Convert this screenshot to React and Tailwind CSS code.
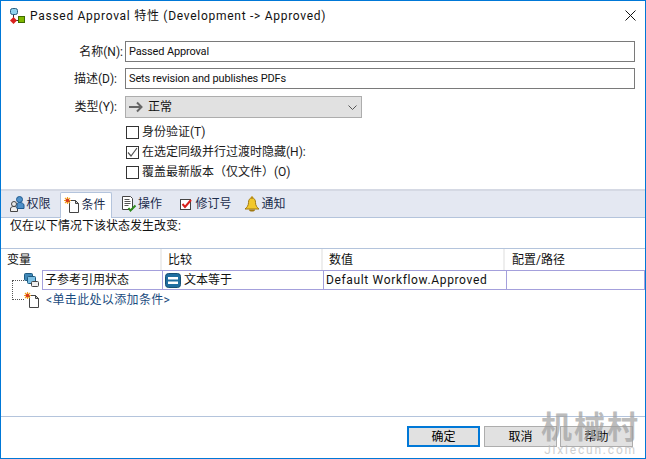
const FONT = "font-['Roboto','Noto_Sans_CJK_SC',sans-serif]";

const TitleIcon = () => (
  <svg width="16" height="16" viewBox="0 0 16 16">
    <path d="M4.500 7v3M4.500 12.500h5" stroke="#333" fill="none" />
    <rect x="1.500" y="0.500" width="7" height="6" rx="2" fill="#8fd3ee" stroke="#2a5f80" />
    <path d="M4.500 9l3.500 3.500L4.500 16 1 12.500z" fill="#d8201c" />
    <rect x="9.500" y="8.500" width="6" height="6" fill="#7fb800" stroke="#3f6a00" />
  </svg>
);

const UsersIcon = () => (
  <svg width="16" height="16" viewBox="0 0 16 16">
    <circle cx="5" cy="8" r="2.500" fill="#e8e8e8" stroke="#444" />
    <path d="M1.500 15.500v-2.500c0-1.500 1-2.500 3.500-2.500s3.500 1 3.500 2.500v2.500z" fill="#eee" stroke="#444" />
    <circle cx="10.500" cy="3.500" r="3" fill="#4f90c8" stroke="#1f5a90" />
    <path d="M8 12.500V9c0-1.600 1-2.600 2.500-2.600S15 7.400 15 9v3.500z" fill="#4f90c8" stroke="#1f5a90" />
  </svg>
);

const NewDocIcon = () => (
  <svg width="16" height="16" viewBox="0 0 16 16">
    <path d="M5.500 3.500h6l3 3v9h-9z" fill="#fff" stroke="#444" />
    <path d="M11.500 3.500v3h3z" fill="#ccc" stroke="#444" />
    <path d="M3.500 0v7M0 3.500h7M1 1l5 5M6 1L1 6" stroke="#f0a020" strokeWidth="1.200" />
    <circle cx="3.500" cy="3.500" r="1.800" fill="#d8381c" />
  </svg>
);

const DocCheckIcon = () => (
  <svg width="16" height="16" viewBox="0 0 16 16">
    <path d="M1.500 0.500h8l2 2v11h-10z" fill="#fff" stroke="#444" />
    <path d="M3.500 3.500h5M3.500 5.500h6M3.500 7.500h6M3.500 9.500h4" stroke="#555" />
    <path d="M7.500 12l2 2.500 5-5" stroke="#2f8a1c" strokeWidth="2" fill="none" />
  </svg>
);

const CheckBoxIcon = () => (
  <svg width="16" height="16" viewBox="0 0 16 16">
    <rect x="2.500" y="3.500" width="10" height="10" fill="#fff" stroke="#444" />
    <path d="M4.500 8l2.500 3 6-7" stroke="#d8201c" strokeWidth="2" fill="none" />
  </svg>
);

const BellIcon = () => (
  <svg width="16" height="16" viewBox="0 0 16 16">
    <circle cx="8" cy="1.500" r="1.200" fill="#c89a1c" />
    <path d="M8 2C5.500 2 4.500 4 4.500 6.500c0 3-1.500 5-3.500 6.500h14c-2-1.500-3.500-3.500-3.500-6.500C11.500 4 10.500 2 8 2z" fill="#f2c82c" stroke="#a07810" />
    <path d="M5 13.500a3 2 0 0 0 6 0z" fill="#a07810" />
  </svg>
);

const RefIcon = () => (
  <svg width="16" height="15" viewBox="0 0 16 15">
    <rect x="0.500" y="0.500" width="8" height="7" rx="1" fill="#3f88b8" stroke="#1f5a80" />
    <rect x="3.500" y="3.500" width="8" height="7" rx="1" fill="#7cc0e4" stroke="#1f5a80" />
    <rect x="7.500" y="8.500" width="7" height="5" rx="1" fill="#eee" stroke="#444" />
  </svg>
);

const EqualsIcon = () => (
  <svg width="16" height="15" viewBox="0 0 16 15">
    <rect x="0.500" y="0.500" width="15" height="14" rx="3" fill="#1f6ea0" stroke="#174f74" />
    <rect x="3" y="4" width="10" height="2.500" fill="#fff" />
    <rect x="3" y="8.500" width="10" height="2.500" fill="#fff" />
  </svg>
);

const Arrow = () => (
  <svg width="15" height="12" viewBox="0 0 15 12">
    <path d="M0 6h13M8 1.500L12.500 6 8 10.500" stroke="#666" strokeWidth="2" fill="none" />
  </svg>
);

const Checkbox = ({ checked, label }) => (
  <div className="flex items-center gap-[3px] h-5">
    <span className="flex items-center justify-center w-[13px] h-[13px] border border-[#333] bg-white">
      {checked && (
        <svg width="11" height="11" viewBox="0 0 11 11">
          <path d="M1 5.500l3 3.500 6-8" stroke="#555" strokeWidth="1.200" fill="none" />
        </svg>
      )}
    </span>
    <span className="text-[12px] text-[#1a1a1a]">{label}</span>
  </div>
);

const Field = ({ label, pad, children }) => (
  <div className="flex items-center">
    <span className={`w-[124px] text-right text-[12px] text-[#1a1a1a] ${pad}`}>{label}</span>
    {children}
  </div>
);

const tabs = [
  { name: '权限', icon: <UsersIcon />, cls: 'w-[54px] pr-[6px]' },
  { name: '条件', icon: <NewDocIcon />, cls: 'w-[52px] pr-[2px]', active: true },
  { name: '操作', icon: <DocCheckIcon />, cls: 'w-[56px] pl-[3px]' },
  { name: '修订号', icon: <CheckBoxIcon />, cls: 'w-[68px] pl-[6px]' },
  { name: '通知', icon: <BellIcon />, cls: 'w-[56px] pl-[2px]' },
];

const Btn = ({ children, primary }) => (
  <button
    className={`w-[73px] h-[21px] text-[12px] text-black bg-[#e1e1e1] ${primary ? 'border-2 border-[#0078d7] mr-[1px]' : 'border border-[#adadad]'}`}
  >
    {children}
  </button>
);

export default function App() {
  return (
    <div className={`${FONT} relative w-[646px] h-[459px] bg-white border border-[#0078d7] flex flex-col overflow-hidden`}>
      <div className="h-[29px] flex items-center pl-[8px] pr-[8px] gap-[5px] shrink-0">
        <TitleIcon />
        <span className="text-[12px] tracking-[0.72px] text-[#111] flex-1">Passed Approval 特性 (Development -&gt; Approved)</span>
        <svg width="11" height="11" viewBox="0 0 11 11" className="mr-[1px]">
          <path d="M0.500 0.500l10 10M10.500 0.500l-10 10" stroke="#111" fill="none" />
        </svg>
      </div>

      <div className="flex flex-col pt-[11px] gap-[6px] shrink-0">
        <Field label="名称(N):" pad="pr-[2px]">
          <div className="w-[510px] h-[21px] border border-[#7a7a7a] flex items-center px-[3px] pt-px text-[11px] tracking-[-0.15px] text-[#111]">Passed Approval</div>
        </Field>
        <Field label="描述(D):" pad="pr-[8px]">
          <div className="w-[510px] h-[21px] border border-[#7a7a7a] flex items-center px-[3px] pt-px text-[11px] tracking-[-0.15px] text-[#111]">Sets revision and publishes PDFs</div>
        </Field>
        <Field label="类型(Y):" pad="pr-[8px]">
          <div className="w-[237px] h-[22px] border border-[#adadad] bg-[#e1e1e1] flex items-center px-[3px] gap-[4px] text-[12px] text-[#111] mt-px">
            <Arrow />
            <span className="flex-1">正常</span>
            <svg width="9" height="5" viewBox="0 0 9 5" className="mr-[1px]">
              <path d="M0.500 0.500l4 4 4-4" stroke="#555" fill="none" />
            </svg>
          </div>
        </Field>
      </div>

      <div className="flex flex-col pl-[125px] pt-[4px] h-[71px] shrink-0">
        <Checkbox label="身份验证(T)" />
        <Checkbox checked label="在选定同级并行过渡时隐藏(H):" />
        <Checkbox label="覆盖最新版本（仅文件）(O)" />
      </div>

      <div className="h-[29px] bg-[#e4e8f2] border-t-2 border-[#d5d9e4] border-b border-b-[#b4c4dc] flex items-end pl-[5px] shrink-0">
        {tabs.map((t) => (
          <div
            key={t.name}
            className={`${t.cls} flex items-center justify-center gap-[1px] text-[12px] text-[#1b2c4c] ${t.active ? 'h-[26px] bg-white border border-b-0 border-[#b4c4dc] rounded-t-[2px] -mb-px pb-[2px]' : 'h-[25px] pb-[2px]'}`}
          >
            {t.icon}
            <span>{t.name}</span>
          </div>
        ))}
      </div>

      <div className="h-[31px] pl-[9px] leading-[16px] text-[12px] text-[#111] border-b border-[#b4c4dc] shrink-0">仅在以下情况下该状态发生改变:</div>

      <div className="grid grid-cols-[161px_161px_182px_1fr] h-[21px] text-[12px] text-[#111] shrink-0">
        <div className="pl-[6px] border-r-2 border-[#eeeeee] flex items-center">变量</div>
        <div className="pl-[6px] border-r-2 border-[#eeeeee] flex items-center">比较</div>
        <div className="pl-[6px] border-r-2 border-[#eeeeee] flex items-center">数值</div>
        <div className="pl-[7px] flex items-center">配置/路径</div>
      </div>

      <div className="flex h-[20px] shrink-0">
        <div className="relative w-[41px] shrink-0">
          <div className="absolute left-[11px] top-[10px] w-[12px] h-[20px] border-l border-t border-dotted border-[#555]" />
          <div className="absolute left-[11px] top-[29px] w-[12px] border-t border-dotted border-[#555]" />
          <div className="absolute left-[23px] top-[3px]"><RefIcon /></div>
        </div>
        <div className="flex-1 grid grid-cols-[119px_161px_183px_1fr] border border-[#a4a0dc] text-[12px] text-[#111]">
          <div className="pl-[2px] flex items-center">子参考引用状态</div>
          <div className="pl-[2px] flex items-center gap-[3px] border-l border-[#a4a0dc]">
            <EqualsIcon />
            <span>文本等于</span>
          </div>
          <div className="pl-[2px] flex items-center border-l border-[#a4a0dc] tracking-[0.65px]">Default Workflow.Approved</div>
          <div className="border-l border-[#a4a0dc]" />
        </div>
      </div>

      <div className="flex items-center h-[20px] pl-[23px] gap-[6px] text-[12px] text-[#1b4c80] tracking-[0.350px] shrink-0">
        <NewDocIcon />
        <span>&lt;单击此处以添加条件&gt;</span>
      </div>

      <div className="flex-1 border-b border-[#b4c4dc]" />

      <div className="h-[41px] flex justify-end items-start pt-[9px] pr-[12px] gap-[3px] shrink-0">
        <Btn primary>确定</Btn>
        <Btn>取消</Btn>
        <Btn>帮助</Btn>
      </div>

      <div className="absolute right-[5px] bottom-[2px] flex flex-col items-center pointer-events-none opacity-70">
        <span className="text-[31px] leading-[32px] font-bold tracking-[2px] text-[#a0a0a0]">机械村</span>
        <span className="text-[12px] leading-[12px] tracking-[1.800px] text-[#bbbbbb]">Jixiecun.com</span>
      </div>
    </div>
  );
}
